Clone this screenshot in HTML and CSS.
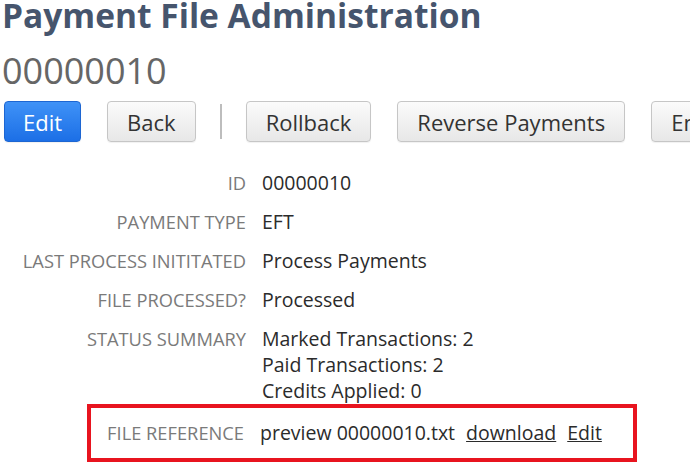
FILE: index.html
```html
<!DOCTYPE html>
<html lang="en">
<head>
<meta charset="utf-8">
<title>Payment File Administration</title>
<link rel="stylesheet" href="styles.css">
</head>
<body>
<div class="page">
  <h1 class="title">Payment File Administration</h1>
  <h2 class="subtitle">00000010</h2>
  <div class="toolbar">
    <button class="btn btn-primary">Edit</button>
    <button class="btn">Back</button>
    <span class="sep"></span>
    <button class="btn">Rollback</button>
    <button class="btn">Reverse Payments</button>
    <button class="btn">Email</button>
  </div>
  <div class="details">
    <div class="row"><span class="label">ID</span><span class="value">00000010</span></div>
    <div class="row"><span class="label">Payment Type</span><span class="value">EFT</span></div>
    <div class="row"><span class="label">Last Process Inititated</span><span class="value">Process Payments</span></div>
    <div class="row"><span class="label">File Processed?</span><span class="value">Processed</span></div>
    <div class="row"><span class="label">Status Summary</span><span class="value">Marked Transactions: 2<br>Paid Transactions: 2<br>Credits Applied: 0</span></div>
    <div class="highlight">
      <div class="row row-inner"><span class="label">File Reference</span><span class="value">preview 00000010.txt<a class="link" href="#">download</a><a class="link" href="#">Edit</a></span></div>
    </div>
  </div>
</div>
</body>
</html>
```
FILE: styles.css
```css
html, body {
  margin: 0;
  padding: 0;
  background: #ffffff;
  overflow: hidden;
}
.page {
  font-family: "Open Sans", "Liberation Sans", sans-serif;
  width: 690px;
  height: 463px;
  overflow: hidden;
  padding: 0 0 0 2px;
  box-sizing: border-box;
}
.title {
  margin: 0;
  font-size: 33.5px;
  line-height: 30px;
  font-weight: 700;
  color: #46556d;
  white-space: nowrap;
}
.subtitle {
  margin: 26px 0 0 0;
  font-size: 36px;
  line-height: 30px;
  font-weight: 400;
  color: #666666;
}
.toolbar {
  display: flex;
  align-items: center;
  flex-wrap: nowrap;
  gap: 26px;
  margin-top: 15px;
  padding-left: 2px;
}
.btn {
  flex: none;
  height: 41px;
  padding: 0 19px;
  font-family: "Open Sans", "Liberation Sans", sans-serif;
  font-size: 22px;
  color: #333333;
  background: linear-gradient(#fbfbfb, #e7e7e7);
  border: 1px solid #c6c6c6;
  border-radius: 4px;
  box-shadow: 0 1px 1px rgba(0,0,0,0.06);
  white-space: nowrap;
}
.btn-primary {
  color: #ffffff;
  background: linear-gradient(#3f92f7, #1c6fe6);
  border-color: #1d66d2;
  padding: 0 18px;
}
.sep {
  flex: none;
  width: 2px;
  height: 35px;
  background: #bdbdbd;
  margin: 0 -2px;
}
.details {
  margin-top: 28px;
}
.row {
  display: grid;
  grid-template-columns: 244px auto;
  column-gap: 16px;
  align-items: start;
}
.row + .row {
  margin-top: 13px;
}
.label {
  text-align: right;
  text-transform: uppercase;
  font-size: 18.3px;
  line-height: 26px;
  color: #7a7a7a;
  white-space: nowrap;
}
.value {
  font-size: 19.5px;
  line-height: 26px;
  color: #2b2b2b;
  white-space: nowrap;
}
.highlight {
  margin-left: 85px;
  width: 550px;
  box-sizing: border-box;
  border: 4px solid #e8141f;
  padding: 12px 0;
}
.row-inner {
  grid-template-columns: 153px auto;
}
.link {
  color: #2b2b2b;
  text-decoration: underline;
  margin-left: 11px;
}
```
